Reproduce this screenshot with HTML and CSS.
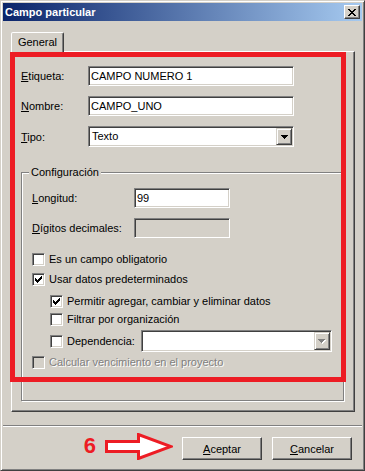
FILE: index.html
```html
<!DOCTYPE html>
<html lang="es">
  <head>
    <meta charset="UTF-8" />
    <title>Campo particular</title>
    <link rel="stylesheet" href="styles.css">
  </head>
  <body>
    <div class="window">
      <div class="title-bar">
        <span class="title">Campo particular</span>
        <span class="close-btn">
          <svg width="8" height="7" viewBox="0 0 8 7"><path fill="#000" d="M0 0h2v1H0zM6 0h2v1H6zM1 1h2v1H1zM5 1h2v1H5zM2 2h4v1H2zM3 3h2v1H3zM2 4h4v1H2zM1 5h2v1H1zM5 5h2v1H5zM0 6h2v1H0zM6 6h2v1H6z"/></svg>
        </span>
      </div>

      <div class="client">
        <div class="content">
          <div class="tabs">
            <div class="tab">General</div>
          </div>

          <div class="panel">
            <div class="form-grid">
              <label><u>E</u>tiqueta:</label>
              <div class="textbox">CAMPO NUMERO 1</div>

              <label><u>N</u>ombre:</label>
              <div class="textbox">CAMPO_UNO</div>

              <label><u>T</u>ipo:</label>
              <div class="combo">
                <span class="combo-text">Texto</span>
                <span class="combo-btn">
                  <svg width="7" height="4" viewBox="0 0 7 4"><path fill="#000" d="M0 0h7v1H0zM1 1h5v1H1zM2 2h3v1H2zM3 3h1v1H3z"/></svg>
                </span>
              </div>
            </div>

            <fieldset class="group">
              <legend>Configuración</legend>

              <div class="group-grid">
                <label><u>L</u>ongitud:</label>
                <div class="textbox">99</div>

                <label><u>D</u>ígitos decimales:</label>
                <div class="textbox disabled"></div>
              </div>

              <div class="check-list">
                <div class="check-row">
                  <span class="checkbox"></span>
                  <span>Es un campo obligatorio</span>
                </div>
                <div class="check-row">
                  <span class="checkbox">
                    <svg width="7" height="7" viewBox="0 0 7 7"><path fill="#000" d="M0 2h1v3H0zM1 3h1v3H1zM2 4h1v3H2zM3 3h1v3H3zM4 2h1v3H4zM5 1h1v3H5zM6 0h1v3H6z"/></svg>
                  </span>
                  <span>Usar datos predeterminados</span>
                </div>
                <div class="check-row sub first-sub">
                  <span class="checkbox">
                    <svg width="7" height="7" viewBox="0 0 7 7"><path fill="#000" d="M0 2h1v3H0zM1 3h1v3H1zM2 4h1v3H2zM3 3h1v3H3zM4 2h1v3H4zM5 1h1v3H5zM6 0h1v3H6z"/></svg>
                  </span>
                  <span>Permitir agregar, cambiar y eliminar datos</span>
                </div>
                <div class="check-row sub">
                  <span class="checkbox"></span>
                  <span>Filtrar por organización</span>
                </div>
                <div class="check-row sub dep-row">
                  <span class="checkbox"></span>
                  <span class="dep-label">Dependencia:</span>
                  <div class="combo dep-combo">
                    <span class="combo-text"></span>
                    <span class="combo-btn">
                      <svg width="8" height="5" viewBox="0 0 8 5">
                        <path fill="#fff" d="M1 1h7v1H1zM2 2h5v1H2zM3 3h3v1H3zM4 4h1v1H4z"/>
                        <path fill="#808080" d="M0 0h7v1H0zM1 1h5v1H1zM2 2h3v1H2zM3 3h1v1H3z"/>
                      </svg>
                    </span>
                  </div>
                </div>
                <div class="check-row muted">
                  <span class="checkbox disabled"></span>
                  <span>Calcular vencimiento en el proyecto</span>
                </div>
              </div>
            </fieldset>
          </div>
        </div>

        <div class="separator"></div>

        <div class="button-row">
          <span class="step">6</span>
          <svg class="arrow" width="68" height="27" viewBox="0 0 68 27">
            <path d="M1.5 8.5H33.5V1.5L66 13.5L33.5 25.5V18.5H1.5Z" fill="#fff" stroke="#ed1c24" stroke-width="3" stroke-linejoin="miter"/>
          </svg>
          <button class="btn"><u>A</u>ceptar</button>
          <button class="btn"><u>C</u>ancelar</button>
        </div>
      </div>

      <!-- annotation drawn over the dialog -->
      <div class="highlight"></div>
    </div>
  </body>
</html>
```

FILE: styles.css
```css
body {
  margin: 0;
  font-family: "Liberation Sans", Arial, sans-serif;
  font-size: 11px;
  color: #000;
  background-color: #d4d0c8;
}

.window {
  position: relative;
  box-sizing: border-box;
  width: 365px;
  height: 471px;
  padding: 2px;
  border: 1px solid;
  border-color: #d4d0c8 #404040 #404040 #d4d0c8;
  box-shadow: inset 1px 1px #fff, inset -1px -1px #808080;
  background-color: #d4d0c8;
}

/* title bar */
.title-bar {
  display: flex;
  align-items: center;
  justify-content: space-between;
  height: 18px;
  background: linear-gradient(to right, #0a246a, #a6caf0);
}

.title {
  padding-left: 2px;
  color: #fff;
  font-weight: bold;
}

.close-btn {
  display: flex;
  align-items: center;
  justify-content: center;
  box-sizing: border-box;
  width: 16px;
  height: 14px;
  margin-right: 2px;
  border: 1px solid;
  border-color: #fff #404040 #404040 #fff;
  box-shadow: inset -1px -1px #808080;
  background-color: #d4d0c8;
}

/* tabs + panel */
.content {
  padding: 0 7px 0 8px;
}

.tabs {
  display: flex;
  margin-top: 11px;
}

.tab {
  position: relative;
  z-index: 1;
  box-sizing: border-box;
  width: 53px;
  height: 20px;
  margin-bottom: -1px;
  border: 1px solid;
  border-bottom: none;
  border-color: #fff #404040 transparent #fff;
  border-radius: 2px 2px 0 0;
  box-shadow: inset -1px 0 #808080;
  background-color: #d4d0c8;
  line-height: 18px;
  text-align: center;
}

.panel {
  display: flex;
  flex-direction: column;
  box-sizing: border-box;
  height: 361px;
  padding: 14px 9px 10px 9px;
  border: 1px solid;
  border-color: #fff #404040 #404040 #fff;
  box-shadow: inset -1px -1px #808080;
}

.form-grid {
  display: grid;
  grid-template-columns: 67px 206px;
  grid-template-rows: 20px 20px 21px;
  row-gap: 10px;
  align-items: center;
}

.group-grid {
  display: grid;
  grid-template-columns: 102px 96px;
  grid-auto-rows: 20px;
  row-gap: 10px;
  align-items: center;
}

label {
  white-space: nowrap;
}

.textbox,
.combo {
  box-sizing: border-box;
  height: 20px;
  border: 1px solid;
  border-color: #808080 #fff #fff #808080;
  box-shadow: inset 1px 1px #404040, inset -1px -1px #d4d0c8;
  background-color: #fff;
}

.textbox {
  padding: 0 2px;
  line-height: 18px;
  white-space: nowrap;
}

.textbox.disabled {
  background-color: #d4d0c8;
}

.combo {
  display: flex;
  height: 21px;
  padding: 1px;
}

.combo-text {
  flex: 1;
  padding-left: 2px;
  line-height: 17px;
}

.combo-btn {
  display: flex;
  align-items: center;
  justify-content: center;
  box-sizing: border-box;
  width: 16px;
  height: 17px;
  border: 1px solid;
  border-color: #d4d0c8 #404040 #404040 #d4d0c8;
  box-shadow: inset 1px 1px #fff, inset -1px -1px #808080;
  background-color: #d4d0c8;
}

/* Configuración group */
.group {
  flex: 1;
  min-width: 0;
  margin: 19px 1px 0 0;
  padding: 9px 10px 0 10px;
  border: 1px solid #808080;
  box-shadow: inset 1px 1px #fff, 1px 1px #fff;
}

.group legend {
  margin-left: -3px;
  padding: 0 2px;
  line-height: 13px;
  background-color: #d4d0c8;
}

.check-list {
  margin-top: 11px;
}

.check-row {
  display: flex;
  align-items: center;
  gap: 4px;
  height: 20px;
  white-space: nowrap;
}

.check-row.sub {
  height: 18px;
  padding-left: 18px;
}

.check-row.first-sub {
  margin-top: 3px;
}

.check-row.dep-row {
  height: 22px;
  margin-top: 2px;
}

.dep-label {
  width: 70px;
}

.dep-combo {
  width: 191px;
  height: 22px;
}

.dep-combo .combo-btn {
  height: 18px;
}

.checkbox {
  display: flex;
  align-items: center;
  justify-content: center;
  flex: none;
  box-sizing: border-box;
  width: 13px;
  height: 13px;
  border: 1px solid;
  border-color: #808080 #fff #fff #808080;
  box-shadow: inset 1px 1px #404040, inset -1px -1px #d4d0c8;
  background-color: #fff;
}

.checkbox.disabled {
  background-color: #d4d0c8;
}

.muted {
  color: #808080;
  text-shadow: 1px 1px #fff;
}

/* bottom buttons */
.separator {
  margin-top: 13px;
  border-top: 1px solid #808080;
  border-bottom: 1px solid #fff;
}

.button-row {
  display: flex;
  align-items: flex-start;
  justify-content: flex-end;
  margin-top: 10px;
  padding-right: 10px;
}

.step {
  margin-right: 9px;
  color: #ed1c24;
  font-size: 22px;
  font-weight: bold;
  line-height: 17px;
}

.arrow {
  margin: -4px 9px 0 0;
}

.btn {
  box-sizing: border-box;
  width: 80px;
  height: 23px;
  margin-left: 10px;
  padding: 0;
  border: 1px solid;
  border-color: #fff #404040 #404040 #fff;
  box-shadow: inset -1px -1px #808080;
  background-color: #d4d0c8;
  font-family: "Liberation Sans", Arial, sans-serif;
  font-size: 11px;
  color: #000;
}

.arrow + .btn {
  margin-left: 0;
}

.highlight {
  position: absolute;
  left: 9px;
  top: 51px;
  box-sizing: border-box;
  width: 336px;
  height: 330px;
  border: 5px solid #ed1c24;
}
```
